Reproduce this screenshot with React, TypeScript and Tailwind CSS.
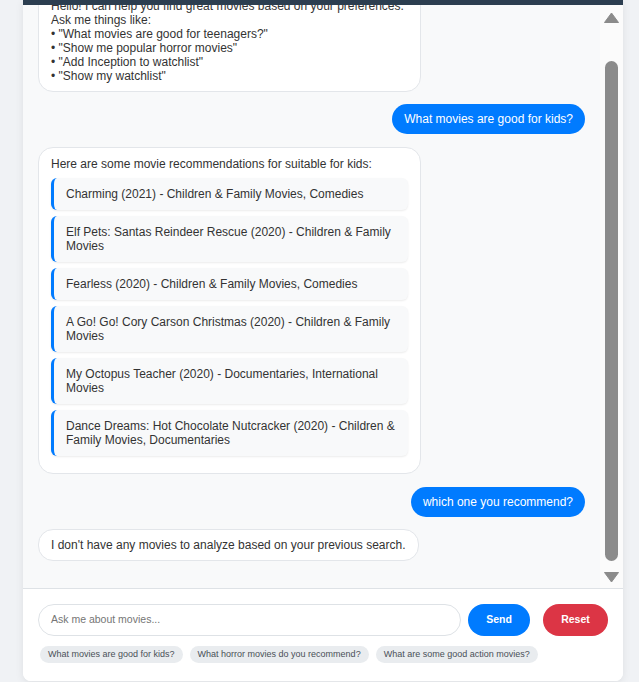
import React from "react";

const items = [
  "Charming (2021) - Children & Family Movies, Comedies",
  "Elf Pets: Santas Reindeer Rescue (2020) - Children & Family Movies",
  "Fearless (2020) - Children & Family Movies, Comedies",
  "A Go! Go! Cory Carson Christmas (2020) - Children & Family Movies",
  "My Octopus Teacher (2020) - Documentaries, International Movies",
  "Dance Dreams: Hot Chocolate Nutcracker (2020) - Children & Family Movies, Documentaries",
];

const chips = [
  "What movies are good for kids?",
  "What horror movies do you recommend?",
  "What are some good action movies?",
];

export default function App() {
  return (
    <div className="h-[682px] overflow-hidden bg-[#f0f2f5] font-['Liberation_Sans',Arial,sans-serif]">
      <div className="ml-[23px] flex h-[681px] w-[600px] flex-col overflow-hidden rounded-b-[8px] bg-white shadow-[0_2px_8px_rgba(0,0,0,0.08)]">
        <div className="h-[5px] shrink-0 bg-[#2c3e50]" />
        <div className="flex h-[583px] shrink-0 bg-[#f8f9fa]">
          <div className="flex min-w-0 flex-1 flex-col justify-end overflow-hidden px-[15px] pb-[15px] text-[12px] leading-[14px]">
            <div className="mb-[12px] flex justify-start">
              <div className="w-[70%] whitespace-pre-line rounded-[15px] border border-[#e3e6ea] bg-white px-3 py-2 text-[#333]">
                {"Hello! I can help you find great movies based on your preferences.\nAsk me things like:\n• \"What movies are good for teenagers?\"\n• \"Show me popular horror movies\"\n• \"Add Inception to watchlist\"\n• \"Show my watchlist\""}
              </div>
            </div>
            <div className="mb-[13px] flex justify-end">
              <div className="max-w-[70%] rounded-[15px] bg-[#007bff] px-3 py-2 text-white">
                What movies are good for kids?
              </div>
            </div>
            <div className="mb-[13px] flex justify-start">
              <div className="max-w-[70%] rounded-[15px] border border-[#e3e6ea] bg-white px-3 pb-2 pt-[9px] text-[#333]">
                <div>Here are some movie recommendations for suitable for kids:</div>
                <div className="mb-[9px] mt-[7px] flex flex-col gap-[6px]">
                  {items.map((t) => (
                    <div
                      key={t}
                      className="rounded-[6px] border-l-[3px] border-[#007bff] bg-[#f8f9fa] px-3 py-[9px] shadow-[0_1px_2px_rgba(0,0,0,0.08)]"
                    >
                      {t}
                    </div>
                  ))}
                </div>
              </div>
            </div>
            <div className="mb-[12px] flex justify-end">
              <div className="max-w-[70%] rounded-[15px] bg-[#007bff] px-3 py-2 text-white">
                which one you recommend?
              </div>
            </div>
            <div className="mb-[12px] flex justify-start">
              <div className="max-w-[70%] rounded-[15px] border border-[#e3e6ea] bg-white px-3 py-2 text-[#333]">
                I don't have any movies to analyze based on your previous search.
              </div>
            </div>
          </div>
          <div className="flex w-[23px] shrink-0 flex-col items-center bg-[#fbfbfb] pt-[7px]">
            <svg width="15" height="11" viewBox="0 0 15 11">
              <path d="M7.5 1 L14.5 10.5 L0.5 10.5 Z" fill="#8b8b8b" strokeLinejoin="round" stroke="#8b8b8b" strokeWidth="1" />
            </svg>
            <div className="mt-[38px] h-[500px] w-[13px] rounded-full bg-[#8b8b8b]" />
            <svg className="mt-[11px]" width="15" height="11" viewBox="0 0 15 11">
              <path d="M0.5 0.5 L14.5 0.5 L7.5 10 Z" fill="#8b8b8b" strokeLinejoin="round" stroke="#8b8b8b" strokeWidth="1" />
            </svg>
          </div>
        </div>
        <div className="flex-1 border-t border-[#dee2e6] bg-white px-[15px] pt-[15px]">
          <div className="flex items-center">
            <div className="flex h-[32px] flex-1 items-center rounded-full border border-[#dee2e6] bg-white px-3 text-[10.5px] text-[#757575]">
              Ask me about movies...
            </div>
            <div className="ml-[7px] flex h-[32px] w-[62px] items-center justify-center rounded-full bg-[#007bff] text-[10.5px] font-bold text-white">
              Send
            </div>
            <div className="ml-[13px] flex h-[32px] w-[65px] items-center justify-center rounded-full bg-[#dc3545] text-[10.5px] font-bold text-white">
              Reset
            </div>
          </div>
          <div className="mt-[10px] flex gap-[7px] pl-[2px]">
            {chips.map((c) => (
              <div
                key={c}
                className="flex h-[17px] items-center rounded-full bg-[#e9ecef] px-2 text-[9px] text-[#495057]"
              >
                {c}
              </div>
            ))}
          </div>
        </div>
      </div>
    </div>
  );
}
